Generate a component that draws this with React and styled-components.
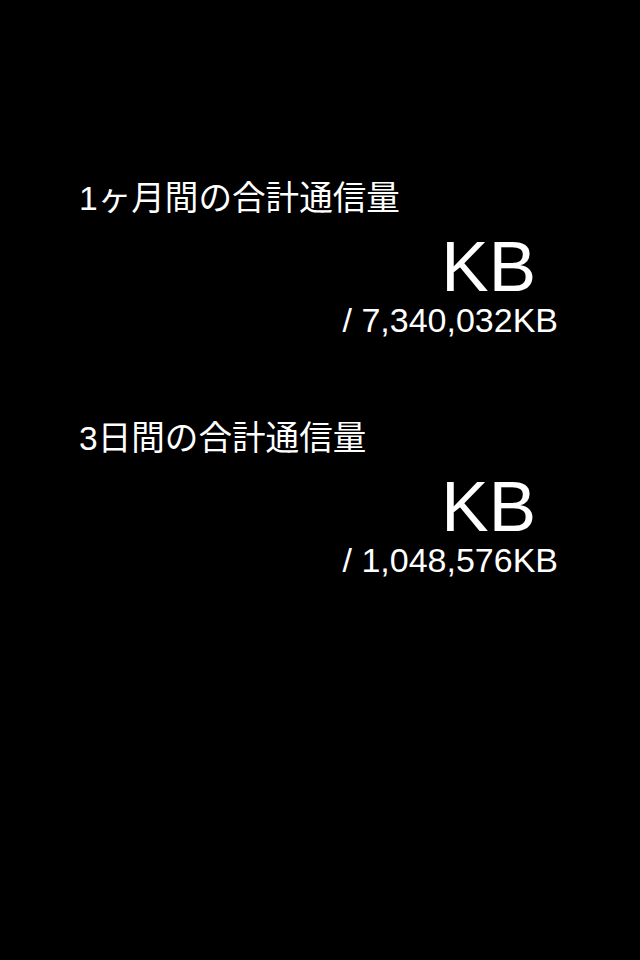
import React from "react"
import styled, { createGlobalStyle } from "styled-components"

const GlobalStyle = createGlobalStyle`
  html, body {
    margin: 0;
    padding: 0;
    background: #000;
  }
`

const Page = styled.div`
  width: 640px;
  height: 960px;
  background: #000;
  color: #fff;
  font-family: "Liberation Sans", "Noto Sans CJK JP", sans-serif;
  padding-top: 179px;
  box-sizing: border-box;
  display: flex;
  flex-direction: column;
  gap: 81px;
`

const Section = styled.section`
  display: flex;
  flex-direction: column;
`

const Heading = styled.div`
  font-size: 33.6px;
  line-height: 40px;
  padding-left: 79px;
  margin-bottom: 13px;
`

const Amount = styled.div`
  font-size: 71px;
  line-height: 70px;
  text-align: right;
  padding-right: 104px;
`

const Limit = styled.div`
  font-size: 34px;
  line-height: 36px;
  text-align: right;
  padding-right: 82px;
`

const usage = [
  { label: "1ヶ月間の合計通信量", value: "", limit: "7,340,032" },
  { label: "3日間の合計通信量", value: "", limit: "1,048,576" },
]

const App = () => {
  return (
    <Page>
      <GlobalStyle />
      {usage.map((item) => (
        <Section key={item.label}>
          <Heading>{item.label}</Heading>
          <Amount>{item.value}KB</Amount>
          <Limit>/ {item.limit}KB</Limit>
        </Section>
      ))}
    </Page>
  )
}

export default App
